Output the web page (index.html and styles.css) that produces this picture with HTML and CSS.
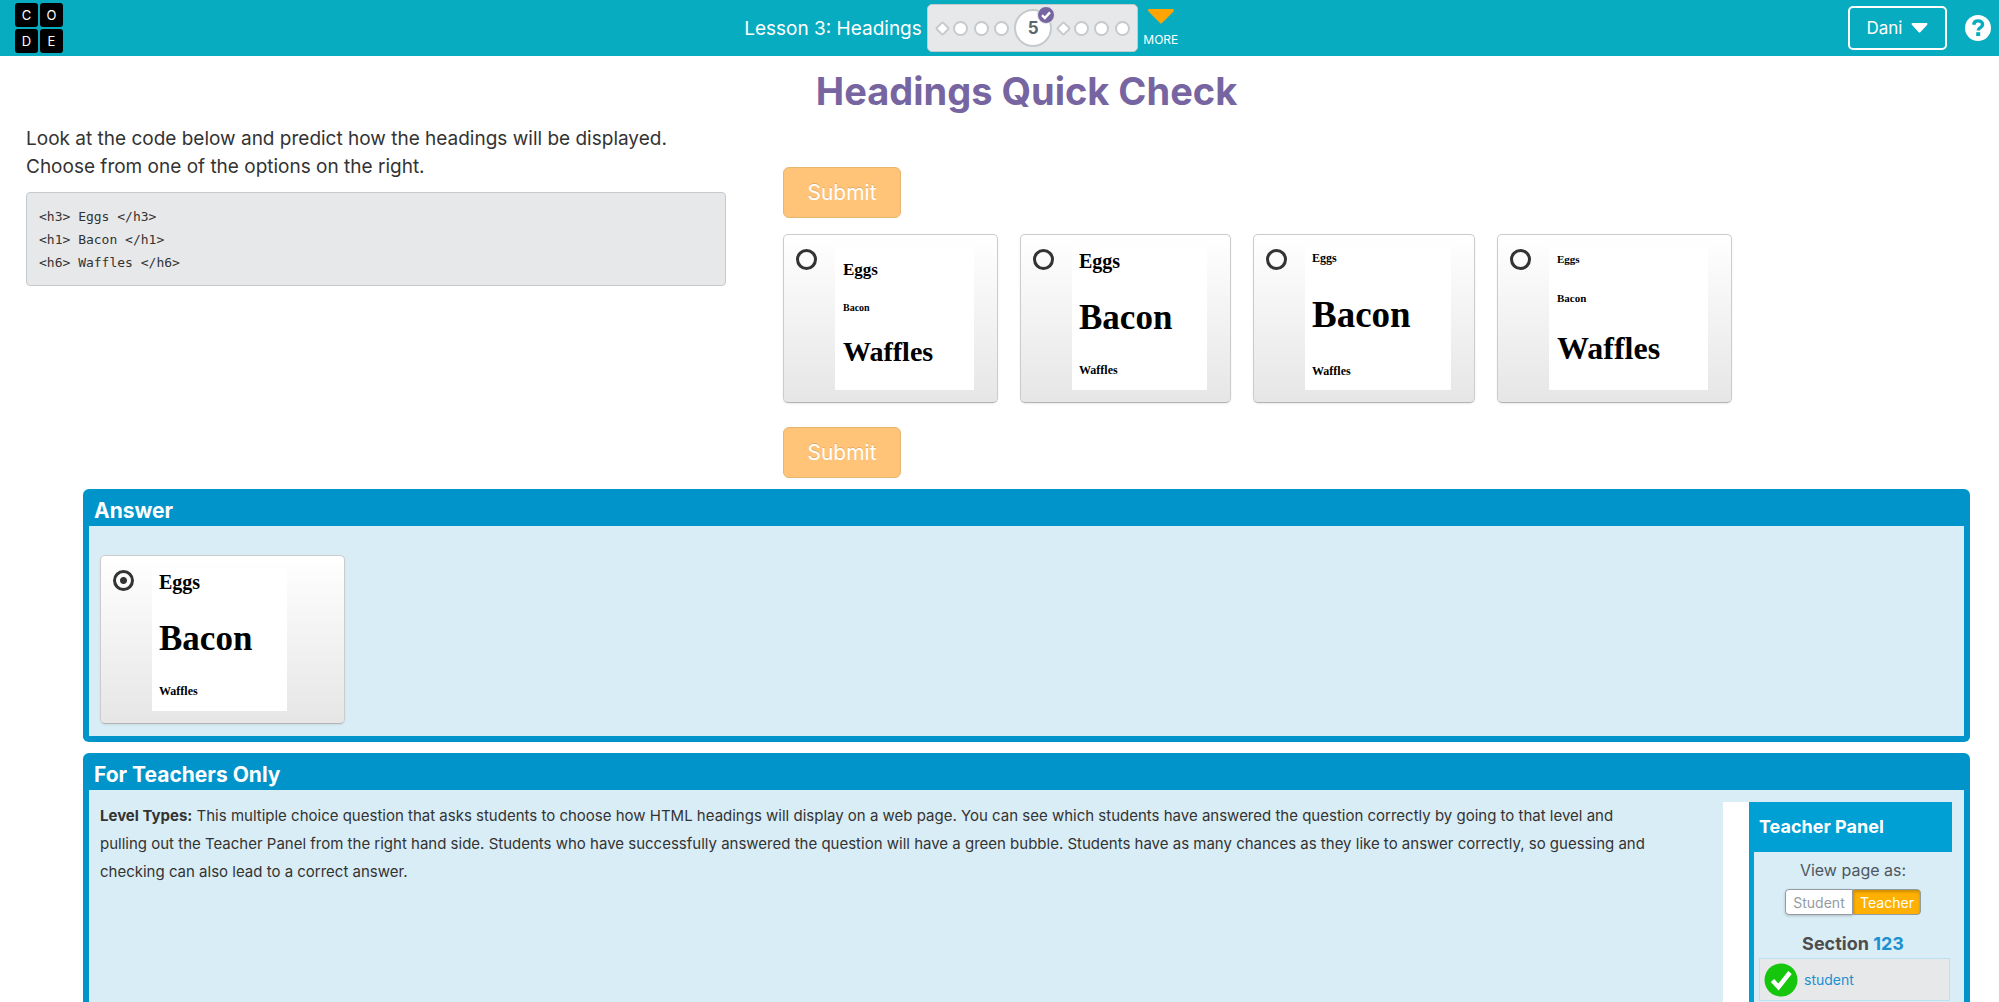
FILE: index.html
```html
<!DOCTYPE html>
<html lang="en">
<head>
<meta charset="utf-8">
<meta name="viewport" content="width=device-width, initial-scale=1">
<title>Headings Quick Check</title>
<link rel="stylesheet" href="styles.css">
</head>
<body>
<div class="app">
  <header class="topbar">
    <a class="logo" href="#" aria-label="Code home"><span>C</span><span>O</span><span>D</span><span>E</span></a>
    <nav class="lesson">
      <a class="lesson-name" href="#">Lesson 3: Headings</a>
      <div class="progress">
        <i class="diamond"></i><i class="dot"></i><i class="dot"></i><i class="dot"></i>
        <span class="current">5
          <svg class="badge" viewBox="0 0 18 18" width="18" height="18"><circle cx="9" cy="9" r="8.5" fill="#7665a0" stroke="#e7e8ea"/><path d="M5 9.2l2.8 2.8 5.2-5.6" fill="none" stroke="#fff" stroke-width="2.4"/></svg>
        </span>
        <i class="diamond"></i><i class="dot"></i><i class="dot"></i><i class="dot"></i>
      </div>
      <button class="more" type="button">
        <svg viewBox="0 0 26 15" width="26" height="15"><path d="M1 0h24q2 1 0 3L14 14q-1 1-2 0L1 3q-2-2 0-3z" fill="#ffa400"/></svg>
        <span>MORE</span>
      </button>
    </nav>
    <div class="account">
      <button class="user" type="button">Dani
        <svg viewBox="0 0 17 10" width="17" height="10"><path d="M1 0h15q1 1 0 2L9.500 9q-1 1-2 0L1 2q-1-1 0-2z" fill="#fff"/></svg>
      </button>
      <a class="help" href="#" aria-label="Help">
        <svg viewBox="0 0 26 26" width="26" height="26"><circle cx="13" cy="13" r="13" fill="#fff"/><path d="M8.700 9.700C9 7 10.800 5.900 13 5.900c2.700 0 4.600 1.500 4.600 3.600 0 3.100-4.400 3-4.400 6" fill="none" stroke="#07acc0" stroke-width="3.400"/><rect x="11.200" y="17.200" width="4" height="3.800" fill="#07acc0"/></svg>
      </a>
    </div>
  </header>

  <main>
    <h1 class="title">Headings Quick Check</h1>
    <div class="question">
      <section class="prompt">
        <p>Look at the code below and predict how the headings will be displayed.<br>Choose from one of the options on the right.</p>
        <pre class="code">&lt;h3&gt; Eggs &lt;/h3&gt;
&lt;h1&gt; Bacon &lt;/h1&gt;
&lt;h6&gt; Waffles &lt;/h6&gt;</pre>
      </section>
      <form class="choices">
        <button class="submit" type="button">Submit</button>
        <div class="options">
          <label class="card"><input type="radio" name="choice">
            <span class="preview preview-a"><b class="s17">Eggs</b><b class="s10">Bacon</b><b class="s28">Waffles</b></span></label>
          <label class="card"><input type="radio" name="choice">
            <span class="preview preview-b"><b class="s20">Eggs</b><b class="s35">Bacon</b><b class="s12">Waffles</b></span></label>
          <label class="card"><input type="radio" name="choice">
            <span class="preview preview-c"><b class="s12">Eggs</b><b class="s37">Bacon</b><b class="s12">Waffles</b></span></label>
          <label class="card"><input type="radio" name="choice">
            <span class="preview preview-d"><b class="s11">Eggs</b><b class="s11">Bacon</b><b class="s32">Waffles</b></span></label>
        </div>
        <button class="submit" type="button">Submit</button>
      </form>
    </div>

    <section class="panel answer">
      <h2>Answer</h2>
      <div class="panel-body">
        <label class="card card-answer"><input type="radio" name="answer" checked>
          <span class="preview preview-b"><b class="s20">Eggs</b><b class="s35">Bacon</b><b class="s12">Waffles</b></span></label>
      </div>
    </section>

    <section class="panel teachers">
      <h2>For Teachers Only</h2>
      <div class="panel-body">
        <p class="notes"><strong>Level Types:</strong> This multiple choice question that asks students to choose how HTML headings will display on a web page. You can see which students have answered the question correctly by going to that level and<br>pulling out the Teacher Panel from the right hand side. Students who have successfully answered the question will have a green bubble. Students have as many chances as they like to answer correctly, so guessing and<br>checking can also lead to a correct answer.</p>
        <aside class="teacher-panel">
          <h3>Teacher Panel</h3>
          <p class="view-as">View page as:</p>
          <div class="toggle"><button type="button">Student</button><button type="button" class="on">Teacher</button></div>
          <p class="section">Section <a href="#">123</a></p>
          <a class="student" href="#">
            <svg viewBox="0 0 34 34" width="34" height="34"><circle cx="17" cy="17" r="16.500" fill="#16c60c"/><path d="M8.500 17.500l6 6.500L26 9.500" fill="none" stroke="#fff" stroke-width="4.500"/></svg>
            student</a>
        </aside>
      </div>
    </section>
  </main>
</div>
</body>
</html>
```

FILE: styles.css
```css
* { box-sizing: border-box; }
body { margin: 0; background: #fff; color: #333; font-family: Inter, "Open Sans", sans-serif; }
h1, h2, h3, p, pre { margin: 0; }
button { font-family: inherit; cursor: pointer; }
a { text-decoration: none; color: #1b91d0; }
.app { height: 100vh; overflow: hidden; display: flex; flex-direction: column; }

/* Top bar */
.topbar { height: 56px; flex: none; background: #07acc0; padding: 0 8px 0 15px; display: grid; grid-template-columns: 1fr auto 1fr; align-items: center; }
.logo { width: 48px; display: grid; grid-template-columns: 23px 23px; gap: 2px; margin-bottom: 1px; }
.logo span { height: 24px; border-radius: 3px; background: #000; color: #fff; font-size: 13px; line-height: 24px; text-align: center; }
.lesson { display: flex; align-items: center; gap: 5px; margin-right: 83px; }
.lesson-name { color: #fff; font-size: 19px; }
.progress { display: flex; align-items: center; justify-content: space-between; width: 211px; height: 48px; padding: 0 7px 0 9px; background: #e7e8ea; border: 1px solid #c6cacd; border-radius: 5px; }
.dot { width: 15px; height: 15px; border: 2px solid #c6cacd; border-radius: 50%; background: #fff; }
.diamond { width: 11px; height: 11px; border: 2px solid #c6cacd; border-radius: 2px; background: #fff; transform: rotate(45deg); }
.current { position: relative; width: 38px; height: 38px; border: 2px solid #c6cacd; border-radius: 50%; background: #fff; color: #5b6770; font-size: 17px; font-weight: 700; line-height: 34px; text-align: center; }
.badge { position: absolute; top: -5px; right: -5px; }
.more { width: 36px; padding: 0; border: 0; background: none; color: #fff; display: flex; flex-direction: column; align-items: center; gap: 8px; font-size: 12px; line-height: 15px; }
.account { display: flex; justify-content: flex-end; align-items: center; gap: 18px; }
.user { width: 99px; height: 44px; background: none; border: 2px solid #fff; border-radius: 5px; color: #fff; font-size: 17px; display: flex; align-items: center; justify-content: center; gap: 9px; }
.help { display: flex; }

/* Question */
main { flex: 1; min-height: 0; display: flex; flex-direction: column; padding: 0 29px 0 83px; }
.title { padding: 14px 0 12px; color: #7665a0; font-size: 38px; line-height: 42px; text-align: center; }
.question { display: grid; grid-template-columns: 700px 1fr; gap: 57px; margin-left: -57px; }
.prompt p { font-size: 19px; line-height: 28px; padding-top: 1px; }
.code { margin-top: 11px; padding: 12px 12px 11px; background: #e7e8ea; border: 1px solid #c6cacd; border-radius: 4px; font: 13px/23px "DejaVu Sans Mono", monospace; }
.choices { padding-top: 43px; }
.submit { display: block; width: 118px; height: 51px; border: 1px solid #e6b56f; border-radius: 6px; background: #ffc477; color: #fff; font-size: 21px; text-shadow: 0 -1px 0 rgba(0, 0, 0, .15); }
.options { display: flex; gap: 22px; margin: 16px 0 24px; }
.card { display: flex; align-items: flex-start; gap: 18px; padding: 12px 23px 12px 12px; border: 1px solid #ccc; border-bottom-color: #b3b3b3; border-radius: 5px; background: linear-gradient(#fff, #e6e6e6); box-shadow: 0 1px 2px rgba(0, 0, 0, .08); }
.card input { appearance: none; flex: none; width: 21px; height: 21px; margin: 2px 0 0; border: 3px solid #333; border-radius: 50%; }
.card input:checked { background: radial-gradient(circle, #333 3px, transparent 4px); }
.preview { display: flex; flex-direction: column; height: 143px; padding-left: 7px; background: #fff; color: #000; font-family: "Liberation Serif", serif; }
.preview b { line-height: 1; }
.preview-a { width: 139px; padding-top: 14px; padding-left: 8px; gap: 25px; }
.preview-b { width: 135px; padding-top: 4px; gap: 29px; }
.preview-c { width: 146px; padding-top: 5px; gap: 32px; }
.preview-d { width: 159px; padding-top: 7px; padding-left: 8px; gap: 28px; }
.s10 { font-size: 10px; }
.s11 { font-size: 11px; }
.s12 { font-size: 12px; }
.s17 { font-size: 17px; }
.s20 { font-size: 20px; }
.s28 { font-size: 28px; }
.s32 { font-size: 32px; }
.s35 { font-size: 35px; }
.s37 { font-size: 37px; }

/* Panels */
.panel { margin-top: 11px; border: 6px solid #0094ca; border-top: 0; border-radius: 6px; background: #d9edf6; }
.panel h2 { height: 37px; padding: 4px 5px 0; background: #0094ca; color: #fff; font-size: 21px; line-height: 36px; }
.answer .panel-body { padding: 29px 11px 12px; }
.card-answer { width: 245px; }
.teachers { flex: 1; min-height: 0; display: flex; flex-direction: column; border-bottom: 0; border-radius: 6px 6px 0 0; }
.teachers .panel-body { flex: 1; min-height: 0; display: flex; justify-content: space-between; padding: 12px 12px 0 11px; }
.notes { flex: 1; font-size: 15px; line-height: 28px; }
.teacher-panel { width: 229px; flex: none; border-left: 26px solid #fff; text-align: center; display: flex; flex-direction: column; align-items: center; box-shadow: inset 5px 0 #009fd4; }
.teacher-panel h3 { width: 100%; height: 50px; flex: none; padding-left: 10px; background: #009fd4; border-radius: 3px 0 0 0; color: #fff; font-size: 18px; line-height: 50px; text-align: left; }
.view-as { padding: 6px 0 7px 5px; font-size: 16px; line-height: 24px; color: #4d575f; }
.toggle { display: flex; margin-left: 5px; flex: none; }
.toggle button { width: 68px; height: 26px; padding: 0; border: 1px solid #949ca2; border-radius: 4px 0 0 4px; background: #fff; color: #949ca2; font-size: 14px; box-shadow: 0 1px 3px rgba(0, 0, 0, .2); }
.toggle .on { border-radius: 0 4px 4px 0; background: #ffb000; color: #fff; box-shadow: inset 0 2px 3px rgba(0, 0, 0, .2); }
.section { padding: 17px 0 2px 5px; font-size: 18px; line-height: 24px; font-weight: 700; color: #4d4d4d; }
.student { align-self: stretch; flex: none; height: 43px; margin: 0 2px 0 10px; padding-left: 4px; display: flex; align-items: center; gap: 6px; border: 1px solid #bbe1f1; background: #e7e8ea; font-size: 14px; }
```
